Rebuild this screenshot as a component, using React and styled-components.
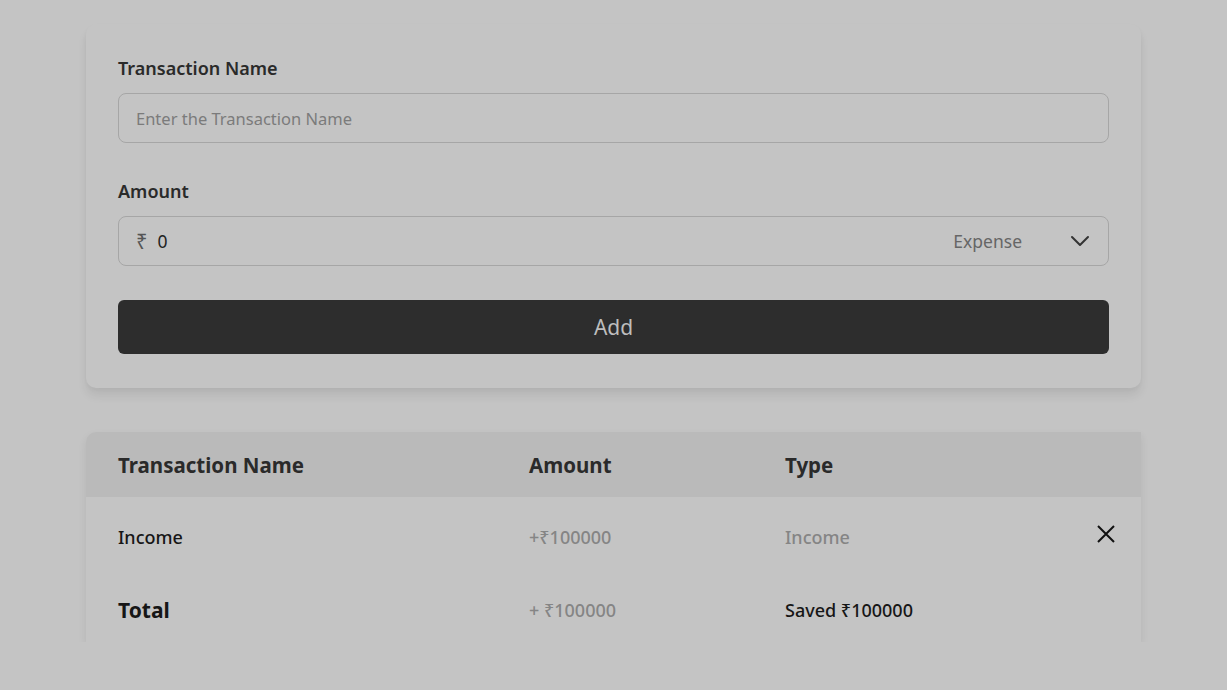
import React, { useState } from 'react';
import styled, { createGlobalStyle } from 'styled-components';

const GlobalStyle = createGlobalStyle`
  * { box-sizing: border-box; }
  body {
    margin: 0;
    background: #c4c4c4;
    font-family: "Noto Sans", "Open Sans", sans-serif;
  }
`;

const Page = styled.div`
  width: 1055px;
  margin: 0 auto;
  padding-top: 24px;
  display: flex;
  flex-direction: column;
  gap: 44px;
`;

const Card = styled.form`
  background: #c4c4c4;
  border-radius: 10px;
  box-shadow: 0 8px 10px rgba(0, 0, 0, 0.07), 0 2px 4px rgba(0, 0, 0, 0.03);
  padding: 32px 32px 34px;
  display: flex;
  flex-direction: column;
`;

const Label = styled.label`
  font-size: 18px;
  font-weight: 600;
  line-height: 24px;
  color: #2a2a2a;
  margin-bottom: 13px;
`;

const Field = styled.div`
  height: 50px;
  border: 1px solid #a6a6a6;
  border-radius: 8px;
  display: flex;
  align-items: center;
  padding: 0 18px 0 17px;
  margin-bottom: ${(p) => p.$gap}px;
`;

const Input = styled.input`
  flex: 1;
  border: none;
  background: transparent;
  outline: none;
  font-family: inherit;
  font-size: 17.5px;
  color: #222;
  padding: 0;
  &::placeholder { color: #7b7b7b; font-size: 16.5px; }
`;

const Rupee = styled.span`
  font-size: 20px;
  color: #555;
  margin-right: 10px;
`;

const TypeSelect = styled.div`
  display: flex;
  align-items: center;
  gap: 48px;
  font-size: 17.5px;
  color: #666;
`;

const AddButton = styled.button`
  height: 54px;
  border: none;
  border-radius: 6px;
  background: #2d2d2d;
  color: #bdbdbd;
  font-family: inherit;
  font-size: 21px;
`;

const Table = styled.div`
  box-shadow: 0 4px 8px rgba(0, 0, 0, 0.08);
  border-top-left-radius: 10px;
`;

const Row = styled.div`
  display: grid;
  grid-template-columns: 411px 256px 1fr 70px;
  align-items: center;
  height: ${(p) => p.$h}px;
  padding-left: 32px;
  background: ${(p) => (p.$head ? '#bababa' : '#c4c4c4')};
  border-top-left-radius: ${(p) => (p.$head ? '10px' : '0')};
`;

const Head = styled.div`
  font-size: 20.5px;
  font-weight: 700;
  color: #2a2a2a;
`;

const Cell = styled.div`
  font-size: ${(p) => (p.$big ? 21 : 18)}px;
  font-weight: ${(p) => (p.$big ? 700 : 500)};
  color: ${(p) => (p.$muted ? '#858585' : '#161616')};
`;

const Remove = styled.button`
  border: none;
  background: none;
  padding: 0;
  display: flex;
  margin-top: -6px;
  margin-left: 26px;
`;

const Chevron = () => (
  <svg width="20" height="20" viewBox="0 0 20 20" fill="none" stroke="#333" strokeWidth="2" strokeLinecap="round" strokeLinejoin="round">
    <path d="M2 6l8 8 8-8" />
  </svg>
);

const Cross = () => (
  <svg width="18" height="18" viewBox="0 0 18 18" fill="none" stroke="#111" strokeWidth="2">
    <path d="M1 1l16 16M17 1L1 17" />
  </svg>
);

const App = () => {
  const [name, setName] = useState('');
  const [amount, setAmount] = useState('0');

  return (
    <>
      <GlobalStyle />
      <Page>
        <Card onSubmit={(e) => e.preventDefault()}>
          <Label>Transaction Name</Label>
          <Field $gap={36}>
            <Input placeholder="Enter the Transaction Name" value={name} onChange={(e) => setName(e.target.value)} />
          </Field>
          <Label>Amount</Label>
          <Field $gap={34}>
            <Rupee>₹</Rupee>
            <Input value={amount} onChange={(e) => setAmount(e.target.value)} />
            <TypeSelect>
              Expense
              <Chevron />
            </TypeSelect>
          </Field>
          <AddButton type="submit">Add</AddButton>
        </Card>

        <Table>
          <Row $head $h={65}>
            <Head>Transaction Name</Head>
            <Head>Amount</Head>
            <Head>Type</Head>
            <div />
          </Row>
          <Row $h={80}>
            <Cell>Income</Cell>
            <Cell $muted>+₹100000</Cell>
            <Cell $muted>Income</Cell>
            <Remove><Cross /></Remove>
          </Row>
          <Row $h={65}>
            <Cell $big>Total</Cell>
            <Cell $muted>+ ₹100000</Cell>
            <Cell>Saved ₹100000</Cell>
            <div />
          </Row>
        </Table>
      </Page>
    </>
  );
};

export default App;
